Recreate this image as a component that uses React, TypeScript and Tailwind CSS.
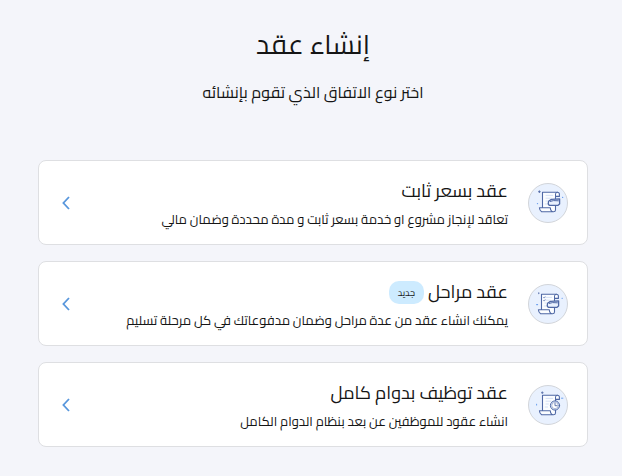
import type { ReactNode } from "react";

interface ContractType {
  id: string;
  title: string;
  description: string;
  badge?: string;
  icon: ReactNode;
}

/* Paper scroll shared by all the contract icons */
function Scroll({ viewBox = "1 1 38 38", children }: { viewBox?: string; children: ReactNode }) {
  return (
    <svg viewBox={viewBox} className="size-full" fill="none" stroke="#4f68a5" strokeLinecap="round" strokeLinejoin="round">
      <path d="M14.5 24.8V9.2H29.4Q31.4 9.2 31.4 11.2V13.4H27.5V27Q27.4 28.8 25.5 28.8H13.6Q11.6 27.6 11.4 24.8H22.3Q22.6 28.6 25.2 28.8" fill="#fbfdff" strokeWidth="1.1" />
      <path d="M27.5 13.4V11Q27.6 9.2 29.4 9.2" strokeWidth="1" />
      <path d="M18 12.4h6.7M18 15.2h5M18 18h2.4M17.2 21h2.4" stroke="#cbd9f3" strokeWidth="0.8" />
      {children}
    </svg>
  );
}

function Handshake() {
  return (
    <>
      <path d="M20.6 18.2L23.4 16.4L31.6 15.8V21L29.8 22.4H21.2Q19.6 20.6 20.6 18.2Z" fill="#e9f1fe" strokeWidth="1.3" />
      <path d="M22.4 18.4L25.4 17.6L30.4 17.8" strokeWidth="1" />
    </>
  );
}

const contractTypes: ContractType[] = [
  {
    id: "fixed",
    title: "عقد بسعر ثابت",
    description: "تعاقد لإنجاز مشروع او خدمة بسعر ثابت و مدة محددة وضمان مالي",
    icon: (
      <Scroll>
        <Handshake />
        <path d="M11.4 7.8v1.8M10.5 8.7h1.8" strokeWidth="0.9" />
        <path d="M34.5 14.4h.2M9.4 20.6h.2" stroke="#6da0ee" strokeWidth="1.2" />
      </Scroll>
    ),
  },
  {
    id: "milestones",
    title: "عقد مراحل",
    description: "يمكنك انشاء عقد من عدة مراحل وضمان مدفوعاتك في كل مرحلة تسليم",
    badge: "جديد",
    icon: (
      <Scroll viewBox="2 0 38 38">
        <path d="M16.4 12.4l.7.7 1-1.4M16.4 15.4l.7.7 1-1.4" strokeWidth="0.6" />
        <Handshake />
        <path d="M11.8 7.8v.8" strokeWidth="1.1" />
        <path d="M35 13.2h.4M9.6 19.6h1" stroke="#6da0ee" strokeWidth="1.1" />
      </Scroll>
    ),
  },
  {
    id: "full-time",
    title: "عقد توظيف بدوام كامل",
    description: "انشاء عقود للموظفين عن بعد بنظام الدوام الكامل",
    icon: (
      <Scroll viewBox="1 0 38 38">
        <circle cx="27" cy="19.5" r="4.6" fill="#dfe9fb" strokeWidth="1" />
        <circle cx="27" cy="19.5" r="3.2" fill="#ffffff" strokeWidth="0.4" />
        <path d="M27 17.4v2.3h1.8" strokeWidth="0.9" />
        <path d="M14.3 5.8v1.8M13.4 6.7h1.8" strokeWidth="0.8" />
        <path d="M33.5 12.2h1.4M8.6 18.2v.9" stroke="#6da0ee" strokeWidth="1" />
      </Scroll>
    ),
  },
];

function ContractCard({ title, description, badge, icon }: ContractType) {
  return (
    <a
      href="#"
      className="flex items-center gap-5 rounded-lg border border-[#dedfe2] bg-white py-3 pe-[23px] ps-[19px]"
    >
      <span className="size-10 shrink-0 overflow-hidden rounded-full border border-[#d2d5da] bg-[#e9f1fe]">
        {icon}
      </span>
      <span className="flex min-w-0 flex-1 flex-col pb-[3px]">
        <span className="flex items-center gap-1">
          <span className="text-[18px] leading-9">{title}</span>
          {badge && (
            <span className="rounded-[10px] bg-[#cdebff] px-[9px] text-[9px] leading-[23px]">
              {badge}
            </span>
          )}
        </span>
        <span className="text-[13px] leading-5">{description}</span>
      </span>
      <svg viewBox="0 0 8 14" className="h-3.5 w-2 shrink-0" fill="none" stroke="#5796dc" strokeWidth="1.8">
        <path d="M7 1L1.4 7L7 13" />
      </svg>
    </a>
  );
}

export default function App() {
  return (
    <main
      dir="rtl"
      className="min-h-screen bg-[#f4f5fa] pb-7 pe-[38px] ps-[34px] pt-6 font-['Cairo','Noto_Sans_Arabic',sans-serif] text-[#151515]"
    >
      <header className="mb-13 text-center">
        <h1 className="text-[27px] leading-10">إنشاء عقد</h1>
        <p className="mt-3 text-[16px] leading-8">اختر نوع الاتفاق الذي تقوم بإنشائه</p>
      </header>
      <nav className="flex flex-col gap-4">
        {contractTypes.map((type) => (
          <ContractCard key={type.id} {...type} />
        ))}
      </nav>
    </main>
  );
}
